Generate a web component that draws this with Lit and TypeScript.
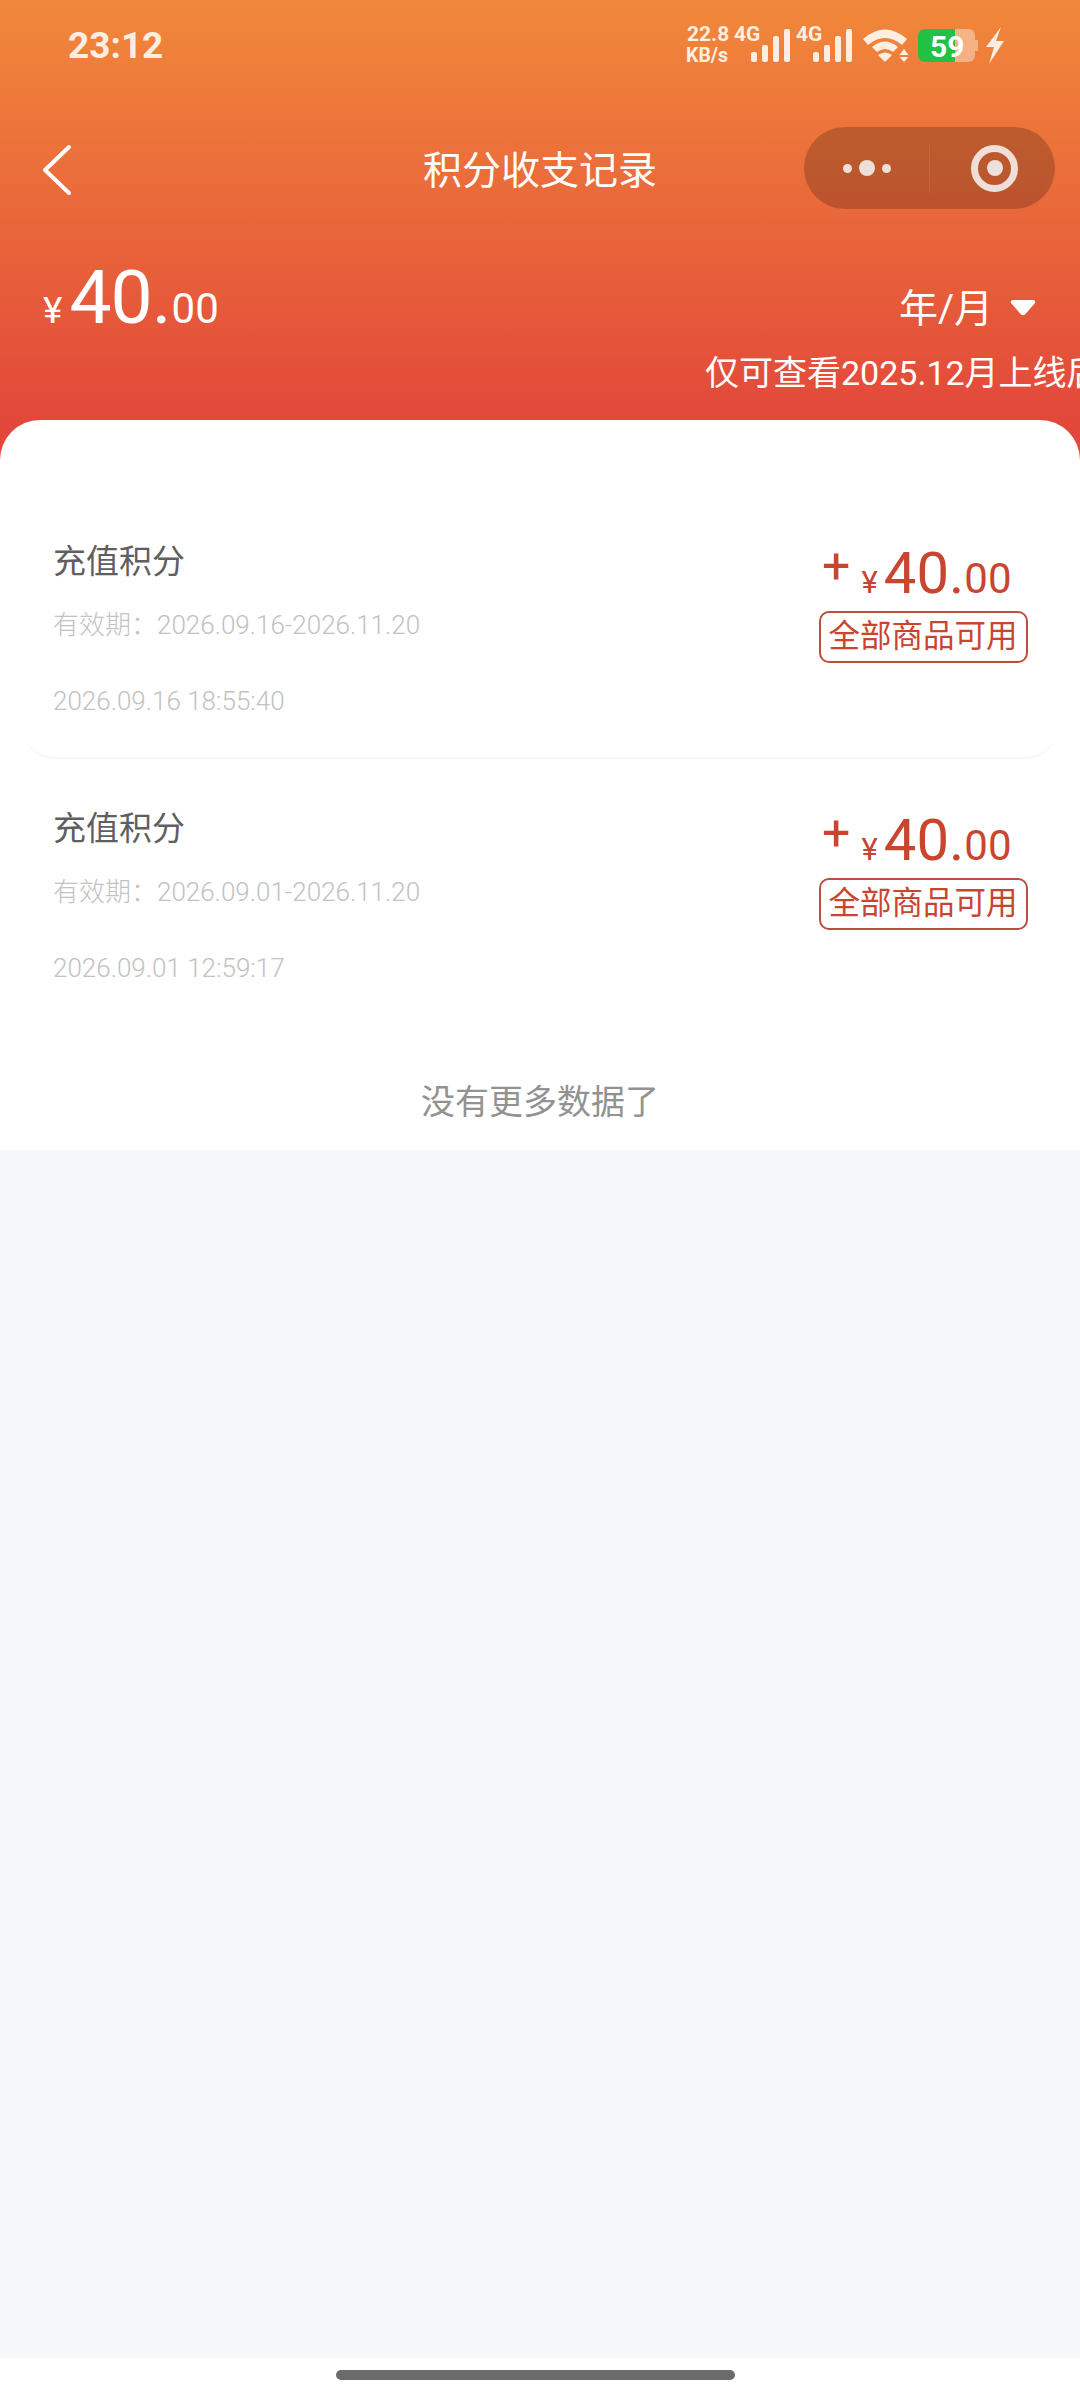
import { LitElement, html, css, svg } from 'lit';
import { customElement } from 'lit/decorators.js';

const records = [
    { valid: '2026.09.16-2026.11.20', time: '2026.09.16 18:55:40' },
    { valid: '2026.09.01-2026.11.20', time: '2026.09.01 12:59:17' },
];

const signal = (x: number) => svg`
    <rect x=${x} y="52" width="6" height="10" rx="2"></rect>
    <rect x=${x + 11} y="45" width="6" height="17" rx="2"></rect>
    <rect x=${x + 22} y="36" width="6" height="26" rx="2"></rect>
    <rect x=${x + 33} y="29" width="6" height="33" rx="2"></rect>
`;

@customElement("app-root")
export default class AppRoot extends LitElement {
    render() {
        return html`
            <div class="page">
                <header class="head">
                    <div class="status">
                        <span class="clock">23:12</span>
                        ${this.statusIcons()}
                    </div>
                    <div class="nav">
                        <svg class="back" width="30" height="52" viewBox="0 0 30 52">
                            <path d="M27 3 L3 26 L27 49" fill="none" stroke="#fff" stroke-width="4" stroke-linecap="round" stroke-linejoin="round"></path>
                        </svg>
                        <div class="title">积分收支记录</div>
                        <div class="capsule">
                            <div class="dots"><i class="dot"></i><i class="dot big"></i><i class="dot"></i></div>
                            <div class="divider"></div>
                            <div class="ring"><i></i></div>
                        </div>
                    </div>
                    <div class="summary">
                        <div class="total">
                            <span class="yen">¥</span><span class="int">40.</span><span class="dec">00</span>
                        </div>
                        <div class="picker">
                            <span>年/月</span>
                            <svg class="caret" width="26" height="16" viewBox="0 0 26 16"><path d="M3 0 H23 Q26 0 25 3 L15 14.500 Q13 16 11 14.500 L1 3 Q0 0 3 0 Z" fill="#fff"></path></svg>
                        </div>
                    </div>
                    <div class="notice">仅可查看2025.12月上线后</div>
                </header>
                <main class="sheet">
                    ${records.map((r, i) => html`
                        <div class="row ${i === 0 ? 'lined' : ''}">
                            <div class="info">
                                <div class="name">充值积分</div>
                                <div class="sub">有效期：${r.valid}</div>
                                <div class="sub stamp">${r.time}</div>
                            </div>
                            <div class="side">
                                <div class="money">
                                    <span class="plus">+</span><span class="y">¥</span><span class="n">40.</span><span class="d">00</span>
                                </div>
                                <div class="tag">全部商品可用</div>
                            </div>
                        </div>
                    `)}
                    <div class="end">没有更多数据了</div>
                </main>
                <div class="blank"></div>
                <div class="gesture"><i></i></div>
            </div>
        `;
    };

    statusIcons() {
        return html`
            <svg class="icons" width="340" height="92" viewBox="680 0 340 92">
                <g fill="#fdeee2" font-family="Roboto, sans-serif" font-weight="700">
                    <text x="687" y="41" font-size="21">22.8</text>
                    <text x="686" y="62" font-size="19.5">KB/s</text>
                    <text x="734" y="41" font-size="21">4G</text>
                    <text x="796" y="41" font-size="21">4G</text>
                    ${signal(751)}
                    ${signal(813)}
                    <path d="M863 39 Q885 20 907 39 L902 45 Q885 31 868 45 Z"></path>
                    <path d="M872 47 Q885 36 898 47 L893 52 Q885 46 877 52 Z"></path>
                    <path d="M878 55 Q885 50 892 55 L885 62 Z"></path>
                    <path d="M904 49 L908.500 55 H899.500 Z"></path>
                    <path d="M904 62 L908.500 57 H899.500 Z"></path>
                    <path d="M955 29 H968 Q975 29 975 36 V40 H978 V51 H975 V55 Q975 62 968 62 H955 Z" opacity="0.45"></path>
                    <path d="M926 29 H955 V62 H926 Q918 62 918 54 V37 Q918 29 926 29 Z" fill="#22c043"></path>
                    <text x="930" y="57" font-size="30" fill="#fff">59</text>
                    <path d="M1001 27 L986 47 H994 L989 64 L1004 41 H996 Z"></path>
                </g>
            </svg>
        `;
    };

    static styles = css`
        :host {
            display: block;
            font-family: Roboto, "Noto Sans CJK SC", sans-serif;
        }

        .page {
            width: 1080px;
            height: 2400px;
            display: flex;
            flex-direction: column;
            background-color: #fff;
            overflow: hidden;
        }

        .head {
            height: 460px;
            flex: none;
            box-sizing: border-box;
            background: linear-gradient(180deg, #f1883a 0%, #e2483a 420px);
            color: #fff;
            overflow: hidden;
        }

        .status {
            height: 92px;
            display: flex;
            justify-content: space-between;
            padding: 0 60px 0 68px;
        }

        .clock {
            font-size: 37px;
            font-weight: 700;
            line-height: 92px;
            color: #fdeee2;
        }

        .icons {
            display: block;
        }

        .nav {
            margin-top: 35px;
            height: 82px;
            display: flex;
            align-items: center;
            justify-content: space-between;
            padding: 0 25px 0 42px;
            position: relative;
        }

        .back {
            margin-top: 3px;
        }

        .title {
            position: absolute;
            top: 3px;
            left: 0;
            right: 0;
            text-align: center;
            font-size: 39px;
            font-weight: 400;
            line-height: 82px;
        }

        .capsule {
            width: 251px;
            height: 82px;
            border-radius: 41px;
            background-color: rgba(0, 0, 0, 0.2);
            display: flex;
            align-items: center;
        }

        .dots {
            width: 125px;
            display: flex;
            align-items: center;
            justify-content: center;
            gap: 7px;
        }

        .dot {
            width: 9px;
            height: 9px;
            border-radius: 50%;
            background-color: #eedfd8;
        }

        .dot.big {
            width: 16px;
            height: 16px;
        }

        .divider {
            width: 1px;
            height: 50px;
            background-color: rgba(255, 255, 255, 0.08);
        }

        .ring {
            width: 47px;
            height: 47px;
            box-sizing: border-box;
            margin-left: 41px;
            border: 7px solid #f0dfd8;
            border-radius: 50%;
            display: flex;
            align-items: center;
            justify-content: center;
        }

        .ring i {
            width: 16px;
            height: 16px;
            border-radius: 50%;
            background-color: #eee1dc;
        }

        .summary {
            display: flex;
            justify-content: space-between;
            padding: 38px 44px 0 43px;
            height: 84px;
            box-sizing: border-box;
        }

        .total {
            display: flex;
            align-items: baseline;
            line-height: 84px;
            height: 84px;
            margin-top: 8px;
        }

        .yen {
            font-size: 37px;
            margin-right: 7px;
        }

        .int {
            font-size: 75px;
            letter-spacing: -1px;
        }

        .dec {
            font-size: 42px;
            margin-left: 1px;
        }

        .picker {
            display: flex;
            align-items: center;
            gap: 17px;
            font-size: 39px;
            font-weight: 400;
            height: 46px;
            margin-top: 35px;
        }

        .caret {
            margin-top: 5px;
        }

        .notice {
            margin: 58px 0 0 705px;
            white-space: nowrap;
            font-size: 34px;
            font-weight: 400;
            line-height: 44px;
        }

        .sheet {
            margin-top: -40px;
            padding: 71px 24px 0;
            height: 730px;
            box-sizing: border-box;
            flex: none;
            background-color: #fff;
            border-radius: 40px 40px 0 0;
            position: relative;
        }

        .row {
            height: 267px;
            box-sizing: border-box;
            padding: 50px 28.5px 0 29px;
            margin-top: -1px;
            display: flex;
            justify-content: space-between;
            border-radius: 30px;
        }

        .row:first-child {
            height: 268px;
            margin-top: 0;
        }

        .row.lined {
            border-bottom: 2px solid #f6f6f6;
        }

        .name {
            font-size: 33px;
            font-weight: 400;
            line-height: 40px;
            color: #5f5f5f;
            margin-top: 1px;
        }

        .sub {
            margin-top: 24px;
            font-size: 26px;
            line-height: 38px;
            font-weight: 300;
            color: #c2c2c2;
        }

        .stamp {
            margin-top: 38px;
        }

        .side {
            display: flex;
            flex-direction: column;
            align-items: flex-end;
            color: #c8452f;
        }

        .money {
            display: flex;
            align-items: baseline;
            height: 70px;
            line-height: 70px;
            margin: -3px 16px 0 0;
        }

        .plus {
            font-size: 50px;
            font-weight: 400;
            margin-right: 11px;
            position: relative;
            top: -10px;
        }

        .y {
            font-size: 31px;
            margin-right: 6px;
        }

        .n {
            font-size: 58px;
            font-weight: 400;
        }

        .d {
            font-size: 42px;
        }

        .tag {
            margin-top: 3px;
            width: 209px;
            height: 52px;
            box-sizing: border-box;
            border: 2px solid #b9503f;
            border-radius: 10px;
            text-align: center;
            font-size: 31.5px;
            font-weight: 400;
            line-height: 48px;
            white-space: nowrap;
        }

        .end {
            text-align: center;
            font-size: 34px;
            font-weight: 400;
            line-height: 40px;
            color: #929292;
            margin-top: 57px;
        }

        .blank {
            flex: 1;
            background-color: #f6f7f9;
        }

        .gesture {
            height: 42px;
            flex: none;
            display: flex;
            justify-content: center;
            background-color: #fff;
        }

        .gesture i {
            width: 399px;
            height: 10px;
            margin: 12px 9px 0 0;
            border-radius: 5px;
            background-color: #6b6b6b;
        }
    `;
};
